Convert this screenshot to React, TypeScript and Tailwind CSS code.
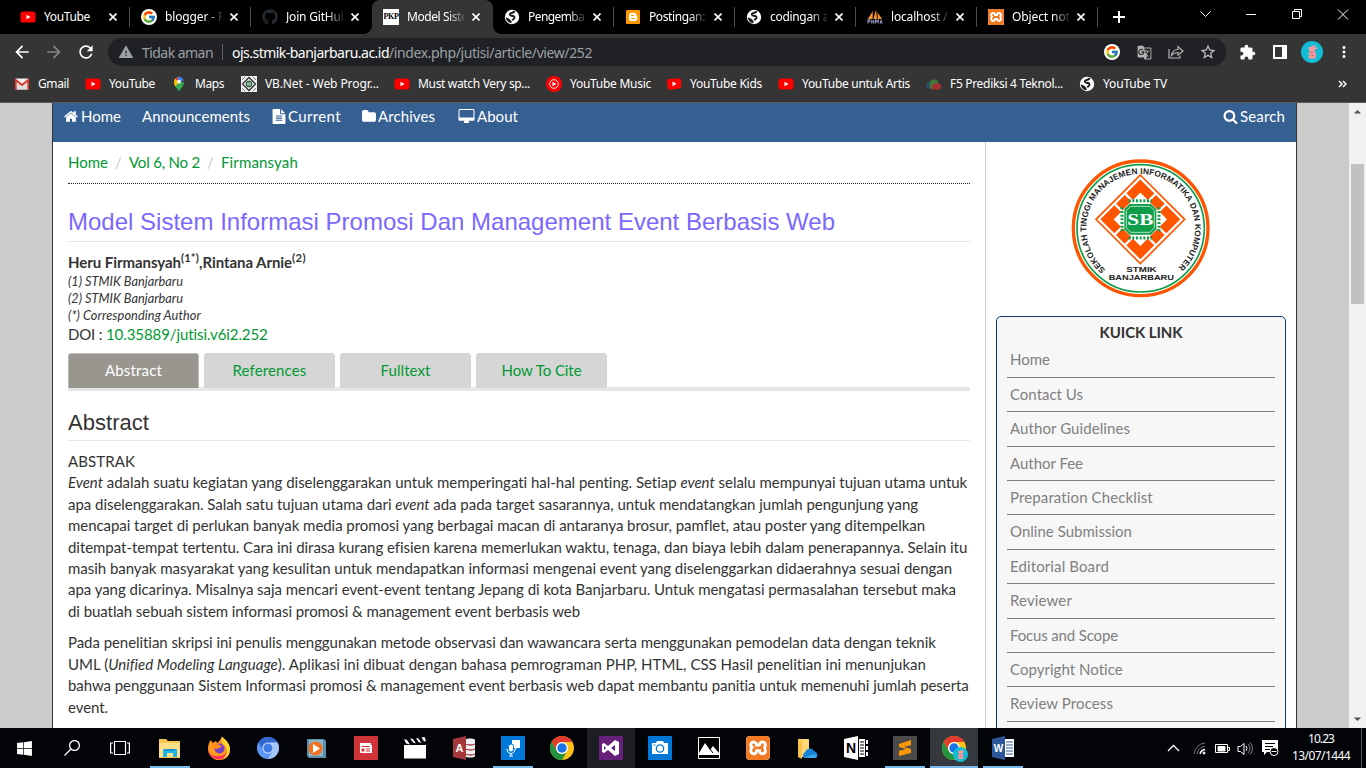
import type { ReactNode } from "react";
import { useLayoutEffect, useRef, useState } from "react";
import { FcGoogle } from "react-icons/fc";
import { FaGithub, FaWindows } from "react-icons/fa";
import { SiXampp } from "react-icons/si";
import { MdArrowBack, MdArrowForward, MdRefresh, MdWarning, MdExtension, MdStarBorder, MdMoreVert, MdGTranslate } from "react-icons/md";

/* Text set to a fixed measure by adjusting its tracking. */
function Fit({ w, className = "", children }: { w: number; className?: string; children: ReactNode }) {
  const ref = useRef<HTMLSpanElement>(null);
  const [ls, setLs] = useState(0);
  useLayoutEffect(() => {
    const el = ref.current;
    if (!el) return;
    const n = (el.textContent ?? "").length;
    setLs((w - el.getBoundingClientRect().width) / n);
  }, [w]);
  return (
    <span ref={ref} className={`inline-block whitespace-pre ${className}`} style={{ letterSpacing: `${ls}px` }}>
      {children}
    </span>
  );
}

const YouTube = () => (
  <svg width="16" height="16" viewBox="0 0 16 16">
    <rect x="0.5" y="2.5" width="15" height="11" rx="2.6" fill="#f00" />
    <path d="M6.5 5.7v4.6l4-2.3z" fill="#fff" />
  </svg>
);
const GoogleDot = () => (
  <span className="flex size-4 items-center justify-center rounded-full bg-white">
    <FcGoogle size={14} />
  </span>
);
const Globe = () => (
  <svg width="16" height="16" viewBox="0 0 16 16">
    <circle cx="8" cy="8" r="7.200" fill="#fff" />
    <path d="M10.200 2.200C9.500 4 8.500 3.800 7 4.200 5.200 4.800 5.500 6.500 7.500 6.700c2.500.2 3.500 1.200 2.800 2.500-.6 1-1.600.8-1.800 2.300" fill="none" stroke="#1b1b1b" strokeWidth="1.900" />
    <path d="M1.800 8.200l3.400 1.500c1.500.8 1.200 1.800 2.300 2.300v2.200C4.500 14 2 11.500 1.800 8.200z" fill="#1b1b1b" />
    <path d="M9.500 2l1.700.6c-.2 1.200-.8 1.700-1.900 2z" fill="#1b1b1b" />
  </svg>
);
const Pkp = () => (
  <span className="flex size-4 items-center justify-center bg-white font-['Liberation_Serif',serif] text-[8px] font-bold tracking-[-0.4px] text-black">PKP</span>
);
const Blogger = () => (
  <svg width="16" height="16" viewBox="0 0 16 16">
    <rect x="1" y="1" width="14" height="14" rx="1" fill="#ff9800" />
    <path d="M6.6 3.8h2.2a2.6 2.6 0 0 1 2.6 2.6c0 .8.9.6.9 1.3v1.6a2.8 2.8 0 0 1-2.8 2.8H6.6a2.6 2.6 0 0 1-2.6-2.6V6.400a2.600 2.600 0 0 1 2.600-2.600z" fill="#fff" />
    <path d="M6.500 6.500h2.200M6.500 9.500h3.200" stroke="#ff9800" strokeWidth="1.200" strokeLinecap="round" />
  </svg>
);
const Pma = () => (
  <svg width="17" height="16" viewBox="0 0 17 16">
    <path d="M1 10 6 2v8zM7 10l2-9 2 9zM11 3l5 7h-4z" fill="#f39a2d" />
    <path d="M6 2v8M10 2l1 8" stroke="#b65a12" strokeWidth="0.8" />
    <path d="M1 15v-4h2v2H1M5 11v4m0-2h2m0-2v4M9 15v-4l1.500 2 1.500-2v4M14 15l1-4 1 4" stroke="#8d8fae" strokeWidth="1.200" fill="none" />
  </svg>
);
const Xampp = ({ small = false }: { small?: boolean }) => (
  <span className={`flex overflow-hidden bg-white ${small ? "size-4 rounded-[1px]" : "size-6 rounded-sm"}`}>
    <SiXampp size={small ? 16 : 24} color="#f27a24" />
  </span>
);

const Close = () => (
  <svg width="8" height="8" viewBox="0 0 8 8" className="shrink-0">
    <path d="M.5.5l7 7M7.500.5l-7 7" stroke="#fff" strokeWidth="1.600" />
  </svg>
);

type TabData = { icon: ReactNode; title: string; w: number; active?: boolean; divider?: boolean };
const tabs: TabData[] = [
  { icon: <YouTube />, title: "YouTube", w: 46, divider: true },
  { icon: <GoogleDot />, title: "blogger - Pen", w: 74, divider: true },
  { icon: <FaGithub size={16} color="#24292e" />, title: "Join GitHub", w: 62 },
  { icon: <Pkp />, title: "Model Sistem", w: 71, active: true },
  { icon: <Globe />, title: "Pengembang", w: 70, divider: true },
  { icon: <Blogger />, title: "Postingan: A", w: 66, divider: true },
  { icon: <Globe />, title: "codingan apl", w: 69, divider: true },
  { icon: <Pma />, title: "localhost / 1", w: 66, divider: true },
  { icon: <Xampp small />, title: "Object not fo", w: 72, divider: true },
];

function Tab({ t }: { t: TabData }) {
  return (
    <div className={`flex h-[34px] w-[121px] shrink-0 items-center pl-[11px] ${t.active ? "relative rounded-t-lg bg-[#353535]" : ""}`}>
      {t.active && (
        <>
          <span className="absolute bottom-0 -left-2 size-2 bg-[radial-gradient(circle_at_0_0,transparent_7.5px,#353535_8px)]" />
          <span className="absolute -right-2 bottom-0 size-2 bg-[radial-gradient(circle_at_100%_0,transparent_7.5px,#353535_8px)]" />
        </>
      )}
      <span className="flex w-4 shrink-0 justify-center">{t.icon}</span>
      <span className={`ml-2 w-[57px] overflow-hidden whitespace-nowrap text-[12px] leading-4 ${t.title === "YouTube" ? "" : "[mask-image:linear-gradient(to_right,black_40px,transparent_60px)]"}`}>
        <Fit w={t.w}>{t.title}</Fit>
      </span>
      <span className="ml-[8px] flex"><Close /></span>
      {t.divider && <span className="ml-[12px] h-5 w-px bg-[#4c4c4c]" />}
    </div>
  );
}

const Gmail = () => (
  <svg width="16" height="16" viewBox="0 0 16 16">
    <rect x="1" y="2.500" width="14" height="11" rx="1" fill="#f2f2f2" />
    <path d="M3 13.500V6l5 4 5-4v7.500z" fill="#dedede" />
    <path d="M1.800 13.500V4l6.200 5 6.200-5v9.500" stroke="#d9372c" strokeWidth="1.800" fill="none" />
  </svg>
);
const Maps = () => (
  <svg width="16" height="16" viewBox="0 0 16 16">
    <path d="M8 16c-.6-3-5-5-5-9.700L8 6l5 .3C13 11 8.600 13 8 16z" fill="#34a853" />
    <path d="M3 6.500A5.200 5.200 0 0 1 4.200 2.600L8 6l-3.500 4.500C3.500 9 3 8 3 6.500z" fill="#fbbc04" />
    <path d="M4.200 2.600A5 5 0 0 1 8 .8V6z" fill="#ea4335" />
    <path d="M6.500 1a5 5 0 0 1 6.200 3.500L8 6z" fill="#4285f4" />
    <circle cx="8" cy="5.700" r="1.900" fill="#fff" />
  </svg>
);
const Vb = () => (
  <svg width="16" height="16" viewBox="0 0 16 16">
    <rect width="16" height="16" fill="#eee" />
    <path d="M8 1.500 14.500 8 8 14.500 1.500 8z" fill="none" stroke="#333" strokeWidth="1.300" />
    <circle cx="8" cy="8" r="3" fill="#5c9670" stroke="#30553d" />
    <path d="M1 4l3-3M12 1l3 3M1 12l3 3M12 15l3-3" stroke="#777" />
    <path d="M6 8h4" stroke="#ddd" />
  </svg>
);
const YtMusic = () => (
  <svg width="16" height="16" viewBox="0 0 16 16">
    <circle cx="8" cy="8" r="8" fill="#f00" />
    <circle cx="8" cy="8" r="4.300" fill="none" stroke="#fff" strokeWidth="0.900" />
    <path d="M6.500 5.700v4.600L10.300 8z" fill="#fff" />
  </svg>
);
const YtKids = () => (
  <svg width="16" height="16" viewBox="0 0 16 16">
    <path d="M1 4.500Q1 3 3 3l10-.8q2-.2 2.200 2v6q0 2-2 2.200l-9 1.300q-2 .3-2.400-2z" fill="#f00" />
    <path d="M6.500 5.500v4.800L10.500 7.700z" fill="#fff" />
  </svg>
);
const Cloud = () => (
  <svg width="16" height="16" viewBox="0 0 16 16">
    <path d="M1.500 12.500A4 4 0 0 1 3 5.500l4 1-2 6.500z" fill="#2d4b69" />
    <path d="M3.500 12C3 6 4.500 3.500 8 3.500c2.500 0 4 1.500 4.500 3.500L8 13H5z" fill="#3f7b3d" />
    <path d="M5.500 13.500c0-4.500 2.500-7 6-6.500a3.800 3.800 0 0 1 2.500 6.500z" fill="#a33232" />
  </svg>
);

const bookmarks: { icon: ReactNode; label: string; w: number; gap: string }[] = [
  { icon: <Gmail />, label: "Gmail", w: 31, gap: "pr-[16px]" },
  { icon: <YouTube />, label: "YouTube", w: 46, gap: "pr-[16px]" },
  { icon: <Maps />, label: "Maps", w: 29, gap: "pr-[17px]" },
  { icon: <Vb />, label: "VB.Net - Web Progr...", w: 114, gap: "pr-[15px]" },
  { icon: <YouTube />, label: "Must watch Very sp...", w: 112, gap: "pr-[16px]" },
  { icon: <YtMusic />, label: "YouTube Music", w: 81, gap: "pr-[15px]" },
  { icon: <YtKids />, label: "YouTube Kids", w: 72, gap: "pr-[16px]" },
  { icon: <YouTube />, label: "YouTube untuk Artis", w: 108, gap: "pr-[16px]" },
  { icon: <Cloud />, label: "F5 Prediksi 4 Teknol...", w: 113, gap: "pr-[16px]" },
  { icon: <Globe />, label: "YouTube TV", w: 64, gap: "" },
];

const Rabbit = ({ size }: { size: number }) => (
  <svg width={size} height={size} viewBox="0 0 22 22">
    <circle cx="11" cy="11" r="11" fill="#12bcd4" />
    <path d="M8.500 9.500C6.500 8 7.500 5.500 10 5.500L14 4l1 1-2 2 3-1 .5 1.500L13 9.500c2 1 2.500 4 1.500 8H8c-1-2-1-3 1-3l-2-2c0-1 1-1 2-1z" fill="#f79aa0" />
    <path d="M9 11l3 1M10 14l3 1" stroke="#c45a6c" strokeWidth="0.800" />
  </svg>
);

function BrowserChrome() {
  return (
    <header className="flex h-[103px] shrink-0 flex-col border-b border-[#5a5a5a] bg-[#353535] font-['Noto_Sans','Open_Sans',sans-serif] text-white">
      <div className="flex h-[34px] shrink-0 items-center bg-black pl-[9px]">
        {tabs.map((t) => <Tab key={t.title} t={t} />)}
        <svg width="268" height="34" viewBox="0 0 268 34" className="shrink-0" fill="none" stroke="#fff">
          <path d="M15 17h12M21 11v12" strokeWidth="2" />
          <path d="M102.500 11.500l5 5 5-5" strokeWidth="1" />
          <path d="M148 14.500h10M194.500 11.500h7v7h-7zM196.500 11.500v-2h7v7h-2M240 9.500l10 10M250 9.500l-10 10" />
        </svg>
      </div>
      <div className="flex h-[36px] shrink-0 items-center pl-[14px]">
        <MdArrowBack size={20} className="mr-[12px] -ml-0.5 w-5" />
        <MdArrowForward size={20} className="mr-[12px] w-5 text-[#858585]" />
        <MdRefresh size={20} className="mr-[12px]" />
        <div className="flex h-7 w-[1118px] items-center rounded-full bg-[#202124] pl-[10px]">
          <MdWarning size={16} className="text-[#9aa0a6]" />
          <span className="ml-[8px] text-[14px] text-[#9aa0a6]"><Fit w={71}>Tidak aman</Fit></span>
          <span className="mx-[9px] h-4 w-px bg-[#5f6368]" />
          <span className="text-[14px] text-white"><Fit w={157}>ojs.stmik-banjarbaru.ac.id</Fit></span>
          <span className="flex-1 text-[14px] text-[#9aa0a6]"><Fit w={203}>/index.php/jutisi/article/view/252</Fit></span>
          <GoogleDot />
          <MdGTranslate size={15} className="ml-[17px] text-[#b5b5b5]" />
          <svg width="16" height="16" viewBox="0 0 16 16" className="ml-[16px]" fill="none" stroke="#b5b5b5" strokeWidth="1.200">
            <path d="M1 5v9h11v-2.500M3.500 11.500c.5-4 3-6 6.500-6V2.500L15 7l-5 4V8.500c-3 0-5 1-6.500 3z" />
          </svg>
          <MdStarBorder size={18} className="mr-[9px] ml-[15px] text-[#c4c4c4]" />
        </div>
        <MdExtension size={17} className="ml-[13px]" />
        <svg width="14" height="14" viewBox="0 0 14 14" className="ml-[17px]"><path d="M0 0h14v14H0zM2 2v10h7V2z" fill="#fff" fillRule="evenodd" /></svg>
        <span className="ml-[14px]"><Rabbit size={22} /></span>
        <MdMoreVert size={18} className="ml-[12px]" />
      </div>
      <div className="flex h-[27px] items-center pl-[14px] text-[12px]">
        {bookmarks.map((b, i) => (
          <span key={i} className={`flex shrink-0 items-center ${b.gap}`}>
            <span className="mr-[8px] flex w-4 justify-center">{b.icon}</span>
            <Fit w={b.w}>{b.label}</Fit>
          </span>
        ))}
        <svg width="9" height="8" viewBox="0 0 9 8" className="mr-[19px] ml-auto" fill="none" stroke="#fff" strokeWidth="1.500"><path d="M1 1l3 3-3 3M5 1l3 3-3 3" /></svg>
      </div>
    </header>
  );
}

const fa = {
  home: "M1472 992v480q0 26-19 45t-45 19h-384v-384h-256v384h-384q-26 0-45-19t-19-45v-480q0-1 .5-3t.5-3l575-474 575 474q1 2 1 6zm223-69l-62 74q-8 9-21 11h-3q-13 0-21-7l-692-577-692 577q-12 8-24 7-13-2-21-11l-62-74q-8-10-7-23.500t11-21.500l719-599q32-26 76-26t76 26l244 204v-195q0-14 9-23t23-9h192q14 0 23 9t9 23v408l219 182q10 8 11 21.500t-7 23.500z",
  file: "M1596 476q14 14 28 36h-472v-472q22 14 36 28zm-476 164h544v1056q0 40-28 68t-68 28h-1344q-40 0-68-28t-28-68v-1600q0-40 28-68t68-28h800v544q0 40 28 68t68 28zm160 736v-64q0-14-9-23t-23-9h-704q-14 0-23 9t-9 23v64q0 14 9 23t23 9h704q14 0 23-9t9-23zm0-256v-64q0-14-9-23t-23-9h-704q-14 0-23 9t-9 23v64q0 14 9 23t23 9h704q14 0 23-9t9-23zm0-256v-64q0-14-9-23t-23-9h-704q-14 0-23 9t-9 23v64q0 14 9 23t23 9h704q14 0 23-9t9-23z",
  folder: "M1728 608v704q0 92-66 158t-158 66h-1216q-92 0-158-66t-66-158v-960q0-92 66-158t158-66h320q92 0 158 66t66 158v32h672q92 0 158 66t66 158z",
  desktop: "M1728 992v-832q0-13-9.500-22.500t-22.500-9.500h-1600q-13 0-22.500 9.500t-9.500 22.500v832q0 13 9.500 22.500t22.500 9.500h1600q13 0 22.500-9.500t9.500-22.500zm128-832v1088q0 66-47 113t-113 47h-544q0 37 16 77.500t32 71 16 43.500q0 26-19 45t-45 19h-512q-26 0-45-19t-19-45q0-14 16-44t32-70 16-78h-544q-66 0-113-47t-47-113v-1088q0-66 47-113t113-47h1600q66 0 113 47t47 113z",
  search: "M1216 832q0-185-131.500-316.500t-316.500-131.500-316.500 131.500-131.500 316.500 131.500 316.500 316.500 131.500 316.500-131.500 131.500-316.500zm512 832q0 52-38 90t-90 38q-54 0-90-38l-343-342q-179 124-399 124-143 0-273.500-55.500t-225-150-150-225-55.500-273.500 55.500-273.500 150-225 225-150 273.500-55.500 273.500 55.500 225 150 150 225 55.500 273.500q0 220-124 399l343 343q37 37 37 90z",
};
const Fa = ({ d, box = "0 0 1792 1792", w = 15, className = "" }: { d: string; box?: string; w?: number; className?: string }) => (
  <svg width={w} height="15" viewBox={box} fill="currentColor" className={className}><path d={d} /></svg>
);

function SiteNav() {
  return (
    <nav className="flex h-[39px] shrink-0 items-start bg-[#366092] pt-[3px] pl-[10px] text-[15px] leading-[21px] text-white">
      <span className="flex w-[79px] items-center"><Fa d={fa.home} w={16} className="mr-[2px]" /><Fit w={40}>Home</Fit></span>
      <span className="w-[129px]"><Fit w={108}>Announcements</Fit></span>
      <span className="flex w-[90px] items-center"><Fa d={fa.file} w={16} className="mr-px" /><Fit w={53}>Current</Fit></span>
      <span className="flex w-[97px] items-center"><Fa d={fa.folder} w={16} className="mr-px" /><Fit w={57}>Archives</Fit></span>
      <span className="flex items-center"><Fa d={fa.desktop} box="-64 0 1920 1792" w={17} className="mr-[2px]" /><Fit w={41}>About</Fit></span>
      <span className="mr-[11px] ml-auto flex items-center"><Fa d={fa.search} className="mr-[2px]" /><Fit w={45}>Search</Fit></span>
    </nav>
  );
}

const abstractLines: [number, ReactNode][] = [
  [67, "ABSTRAK"],
  [900, <><i>Event</i> adalah suatu kegiatan yang diselenggarakan untuk memperingati hal-hal penting. Setiap <i>event</i> selalu mempunyai tujuan utama untuk</>],
  [850, <>apa diselenggarakan. Salah satu tujuan utama dari <i>event</i> ada pada target sasarannya, untuk mendatangkan jumlah pengunjung yang</>],
  [857, "mencapai target di perlukan banyak media promosi yang berbagai macan di antaranya brosur, pamflet, atau poster yang ditempelkan"],
  [899, "ditempat-tempat tertentu. Cara ini dirasa kurang efisien karena memerlukan waktu, tenaga, dan biaya lebih dalam penerapannya. Selain itu"],
  [884, "masih banyak masyarakat yang kesulitan untuk mendapatkan informasi mengenai event yang diselenggarkan didaerahnya sesuai dengan"],
  [888, "apa yang dicarinya. Misalnya saja mencari event-event tentang Jepang di kota Banjarbaru. Untuk mengatasi permasalahan tersebut maka"],
  [512, "di buatlah sebuah sistem informasi promosi & management event berbasis web"],
];
const secondLines: [number, ReactNode][] = [
  [868, "Pada penelitian skripsi ini penulis menggunakan metode observasi dan wawancara serta menggunakan pemodelan data dengan teknik"],
  [858, <>UML (<i>Unified Modeling Language</i>). Aplikasi ini dibuat dengan bahasa pemrograman PHP, HTML, CSS Hasil penelitian ini menunjukan</>],
  [901, "bahwa penggunaan Sistem Informasi promosi & management event berbasis web dapat membantu panitia untuk memenuhi jumlah peserta"],
  [40, "event."],
];
const Lines = ({ rows }: { rows: [number, ReactNode][] }) => (
  <>{rows.map(([w, c], i) => <span key={i} className="block h-[21.430px]"><Fit w={w}>{c}</Fit></span>)}</>
);

const articleTabs: [string, number][] = [["Abstract", 57], ["References", 74], ["Fulltext", 50], ["How To Cite", 80]];

function Article() {
  return (
    <main className="w-[932px] shrink-0 pr-[15px] pl-[15px] text-[15px] leading-[21.430px] text-[#333]">
      <div className="flex h-[42px] items-start border-b border-dotted border-[#222] pt-[10px] text-[#009933]">
        <Fit w={40}>Home</Fit>
        <span className="w-[21px] text-center text-[#ccc]">/</span>
        <Fit w={71}>Vol 6, No 2</Fit>
        <span className="w-[21px] text-center text-[#ccc]">/</span>
        <Fit w={77}>Firmansyah</Fit>
      </div>
      <h1 className="h-[58px] border-b border-[#e7e7e7] pt-[25px] font-['Liberation_Sans',Arial,sans-serif] text-[24px] leading-[26px] text-[#7b68ff]">
        <Fit w={767}>Model Sistem Informasi Promosi Dan Management Event Berbasis Web</Fit>
      </h1>
      <div className="mt-[10px] h-[21px] font-bold">
        <Fit w={113}>Heru Firmansyah</Fit>
        <sup className="top-[-6px] text-[11.250px]"><Fit w={18}>(1*)</Fit></sup>
        <Fit w={93}>,Rintana Arnie</Fit>
        <sup className="top-[-6px] text-[11.250px]"><Fit w={14}>(2)</Fit></sup>
      </div>
      <div className="flex flex-col items-start text-[12.750px] leading-[17.140px] italic">
        <Fit w={115}>(1) STMIK Banjarbaru</Fit>
        <Fit w={115}>(2) STMIK Banjarbaru</Fit>
        <Fit w={133}>(*) Corresponding Author</Fit>
      </div>
      <div><Fit w={38}>DOI : </Fit><span className="text-[#009933]"><Fit w={162}>10.35889/jutisi.v6i2.252</Fit></span></div>
      <div className="mt-[7px] flex h-[38px] gap-[5px] border-b-4 border-[#e6e6e6]">
        {articleTabs.map(([l, w], i) => (
          <span key={l} className={`flex h-[35px] w-[131px] items-center justify-center rounded-t-[3px] ${i === 0 ? "border border-[#bbb] border-b-0 bg-[#999690] text-white" : "bg-[#d6d6d6] text-[#009933]"}`}>
            <Fit w={w}>{l}</Fit>
          </span>
        ))}
      </div>
      <h2 className="mt-[18px] mb-[10px] h-[32px] border-b border-[#e7e7e7] font-['Liberation_Sans',Arial,sans-serif] text-[22px] leading-[27px]">
        <Fit w={81}>Abstract</Fit>
      </h2>
      <div className="mb-[10px]"><Lines rows={abstractLines} /></div>
      <Lines rows={secondLines} />
    </main>
  );
}

function Logo() {
  return (
    <svg width="160" height="155" viewBox="0 0 480 465">
      <circle cx="242" cy="235" r="202" fill="#fff" stroke="#ff5500" strokeWidth="10" />
      <circle cx="242" cy="235" r="191" fill="none" stroke="#0f9d4a" strokeWidth="5" />
      <path id="ring" d="M136.500 359.300A163 163 0 1 1 349 357.800" fill="none" />
      <text fontSize="25" fontWeight="bold" fill="#222" className="font-['Liberation_Sans',sans-serif]">
        <textPath href="#ring" textLength="785">SEKOLAH TINGGI MANAJEMEN INFORMATIKA DAN KOMPUTER</textPath>
      </text>
      <path d="M241 75 374 208 241 341 108 208z" fill="#fff" stroke="#ff5500" strokeWidth="5" />
      <path d="M241 108 341 208 241 308 141 208z" fill="none" stroke="#ff5500" strokeWidth="28" strokeDasharray="45.400 7 37 7 45 0" />
      <path d="M206 152h70M206 264h70M186 172v73M297 172v73" stroke="#0f9d4a" strokeWidth="9" strokeDasharray="6 5" />
      <path d="M209 162h64l16 16v60l-16 16h-64l-16-16v-60z" fill="#0f9d4a" />
      <path d="M212 169h58l13 13v52l-13 13h-58l-13-13v-52z" fill="none" stroke="#fff" strokeWidth="2" />
      <text x="202" y="226" fontSize="52" fontWeight="bold" fill="#fff" textLength="78" lengthAdjust="spacingAndGlyphs" className="font-['Liberation_Serif',serif]">SB</text>
      <g fontSize="24" fontWeight="bold" fill="#222" className="font-['Liberation_Sans',sans-serif]">
        <text x="199" y="367" textLength="91" lengthAdjust="spacingAndGlyphs">STMIK</text>
        <text x="146" y="391" textLength="196" lengthAdjust="spacingAndGlyphs">BANJARBARU</text>
      </g>
    </svg>
  );
}

const links: [string, number][] = [
  ["Home", 40], ["Contact Us", 73], ["Author Guidelines", 120], ["Author Fee", 73], ["Preparation Checklist", 143], ["Online Submission", 122],
  ["Editorial Board", 99], ["Reviewer", 62], ["Focus and Scope", 108], ["Copyright Notice", 113], ["Review Process", 103], ["Publication Ethics", 118],
];

function Sidebar() {
  return (
    <aside className="flex flex-1 flex-col border-l border-[#ccc] px-[10px] text-[15px] leading-[21.430px]">
      <div className="flex h-[174px] shrink-0 justify-center pt-[8px] pr-[2px]"><Logo /></div>
      <div className="h-[500px] shrink-0 rounded-[5px] border border-[#0c3a70] bg-[#f7f7f7] px-[10px] pt-[5px]">
        <h3 className="text-center font-bold text-[#333]"><Fit w={83}>KUICK LINK</Fit></h3>
        {links.map(([l, w]) => (
          <div key={l} className="h-[34.400px] border-b border-[#808080] pt-[6px] pl-[3px] text-[#808080]"><Fit w={w}>{l}</Fit></div>
        ))}
      </div>
    </aside>
  );
}

function ChromeLogo({ size = 24 }: { size?: number }) {
  return (
    <svg width={size} height={size} viewBox="0 0 24 24">
      <circle cx="12" cy="12" r="12" fill="#fbc116" />
      <path d="M1.600 6A12 12 0 0 1 22.400 6H12a6 6 0 0 0-5.200 9z" fill="#e33b2e" />
      <path d="M1.600 6A12 12 0 0 0 12 24l5.200-9A6 6 0 0 1 6.800 15z" fill="#229342" />
      <circle cx="12" cy="12" r="6" fill="#fff" />
      <circle cx="12" cy="12" r="4.700" fill="#1a73e8" />
    </svg>
  );
}

const S = ({ children }: { children: ReactNode }) => <svg width="24" height="24" viewBox="0 0 24 24">{children}</svg>;

const apps: { icon: ReactNode; line?: boolean; bg?: string }[] = [
  { line: true, icon: <S><path d="M1 3h7l2 2h12v17H1z" fill="#f4c64f" /><path d="M1 7h21v14H1z" fill="#fcdf87" /><path d="M5 13h14v8h-4v-4H9v4H5z" fill="#1cb7ea" /><path d="M7 13h10v2H7z" fill="#1d8ecb" /></S> },
  { icon: <S><path d="M15 .5c1 2 8 5 8 13A11 11 0 0 1 1 13c0-4 1-7 3-9l1.500 3L9 5l1 2c2-1 4-4 5-6.500z" fill="#ff9a1f" /><path d="M15 .5c1 2 8 5 8 13a11 11 0 0 1-7 10c5-5 5-12 1-15-2-2-3-5-2-8z" fill="#ffd52f" /><path d="M1 11c0 8 6 10 11 9 4 0 7-2 8-5-1 5-4 8.500-8 8.500S1 20 1 13z" fill="#ff2f5c" /><circle cx="12.500" cy="12.500" r="5" fill="#7140c9" /><path d="M5 9c3-2 6-2 7 0l3 1c-1 2-4 2-5 3-3 0-4-1-5-4z" fill="#ff8a1c" /></S> },
  { icon: <S><circle cx="12" cy="12" r="11" fill="#5e97f6" /><path d="M2.500 6.500A11 11 0 0 1 21.500 6.500H12A5.500 5.500 0 0 0 7 14.500z" fill="#2f66cf" /><path d="M21.500 6.500A11 11 0 0 1 12 23l5-8.500c1.500-3 0-6-3-8z" fill="#a7c7fb" /><circle cx="12" cy="12" r="5.500" fill="#cfe0fc" /><circle cx="12" cy="12" r="4.500" fill="#3e7ae6" /></S> },
  { icon: <S><path d="M2 3h17l2 2v17H4l-2-2z" fill="#5b8da7" /><path d="M4 4h14v16H4z" fill="#86b8cf" /><circle cx="10.500" cy="12.500" r="7" fill="#f37021" /><path d="M8 8l7 4.500L8 17z" fill="#fff" /></S> },
  { icon: <S><path d="M0 0h24v24H0z" fill="#d13438" /><path d="M6 7h11v2h1v8H7q-1 0-1-1z" fill="#fff" /><path d="M7.500 10.500h8M12 13h4M12 15h4" stroke="#d13438" /><path d="M7.500 12.500h3v3h-3z" fill="#d13438" /></S> },
  { icon: <S><path d="M1 9h22v13.500H1zM1 3l3 1 3 4.500-4-1zM7 2.500l3 .5 3 4.500-3-1zM13 2l2.500.5 3 4.500-3-1zM18.500 1.500l3-.5 1.500 4-2 .5z" fill="#fff" /></S> },
  { icon: <S><path d="M13 4c0-2 10-2 10 0v16c0 2-10 2-10 0z" fill="#f0f0f0" /><path d="M13 8q6 2 10 0M13 13q6 2 10 0M13 18q6 2 10 0" stroke="#a4373a" strokeWidth="1.300" fill="none" /><path d="M1 3l13-3v24L1 21z" fill="#a4373a" /><text x="7.500" y="16" fontSize="11" fontWeight="bold" fill="#fff" textAnchor="middle" className="font-['Liberation_Sans',sans-serif]">A</text></S> },
  { line: true, icon: <S><path d="M0 0h24v24H0z" fill="#0078d7" /><path d="M11 4h8v8h-3l-2 2v-2h-3z" fill="#fff" /><rect x="7.500" y="8" width="5" height="8" rx="2.500" fill="#fff" stroke="#0078d7" /><path d="M6 13c0 6 8 6 8 0M10 17v3M8 20h4" stroke="#fff" fill="none" /></S> },
  { icon: <ChromeLogo /> },
  { bg: "bg-[#1c1e22]", icon: <S><path d="M0 0h24v24H0z" fill="#68217a" /><path d="M16 4l4 2v12l-4 2-7-6-4 3-2-1V8l2-1 4 3zM16 9l-4 3 4 3zM5 10v4l2-2z" fill="#fff" fillRule="evenodd" /></S> },
  { icon: <S><path d="M0 0h24v24H0z" fill="#0078d7" /><path d="M4 7h4l1-2h6l1 2h4v11H4z" fill="#fff" /><circle cx="12" cy="12.500" r="3.700" fill="#fff" stroke="#0078d7" strokeWidth="1.300" /><path d="M5.500 9h2" stroke="#0078d7" /></S> },
  { icon: <S><path d="M1.500 1.500h21v21h-21z" fill="#000" stroke="#fff" /><path d="M2 17l6-10 5 7 3-4 6 7v2H2z" fill="#fff" /><path d="M13 13l3 4" stroke="#000" /></S> },
  { icon: <Xampp /> },
  { icon: <S><path d="M3 3h11v18H3z" fill="#ffd876" /><path d="M3 3l4 2v18l-4-2z" fill="#f8c04c" /><path d="M9 22a4 4 0 0 1 1-6 5 5 0 0 1 9-1 4 4 0 0 1 2 7z" fill="#1683d8" /><path d="M9 22l10-4q4 2 2 4z" fill="#35a8ef" /></S> },
  { icon: <S><path d="M0 3l14-3v24L0 21zM15 3h6v18h-6zM22 4h2v4h-2zM22 10h2v4h-2zM22 16h2v4h-2z" fill="#fff" /><path d="M16 6h4M16 9h4M16 12h4M16 15h4M16 18h4" stroke="#000" /><text x="7" y="17" fontSize="14" fontWeight="bold" textAnchor="middle" className="font-['Liberation_Sans',sans-serif]">N</text></S> },
  { line: true, icon: <S><rect width="24" height="24" rx="1" fill="#4b4b4b" /><path d="M6 8l12-4v5l-7 2 7 2v4L6 20v-5l7-2-7-2z" fill="#ff9800" /></S> },
  { line: true, bg: "bg-[#35393d]", icon: <span className="relative flex"><ChromeLogo /><span className="absolute -right-[2px] -bottom-[2px]"><Rabbit size={15} /></span></span> },
  { line: true, icon: <S><path d="M13 3h10v18H13z" fill="#fff" /><path d="M15 6h7M15 9h7M15 12h7M15 15h7M15 18h7" stroke="#2b579a" /><path d="M1 3l13-3v24L1 21z" fill="#2b579a" /><text x="7.500" y="16" fontSize="10" fontWeight="bold" fill="#fff" textAnchor="middle" className="font-['Liberation_Sans',sans-serif]">W</text></S> },
];

function Taskbar() {
  return (
    <footer className="flex h-10 shrink-0 items-stretch bg-[#020408] font-['Noto_Sans','Open_Sans',sans-serif] text-white">
      <span className="flex w-12 items-center justify-center"><FaWindows size={17} /></span>
      <span className="flex w-12 items-center justify-center">
        <svg width="16" height="16" viewBox="0 0 16 16" fill="none" stroke="#fff" strokeWidth="1.300"><circle cx="10.500" cy="5.500" r="4.900" /><path d="M7 9l-6.500 6.500" /></svg>
      </span>
      <span className="mr-[2px] flex w-12 items-center justify-center">
        <svg width="20" height="16" viewBox="0 0 20 16" fill="none" stroke="#fff" strokeWidth="1.200"><path d="M4.500 1.500h11v13h-11zM3 3H.6v10H3M17 3h2.400v10H17" /></svg>
      </span>
      <div className="flex gap-px">
        {apps.map((a, i) => (
          <span key={i} className={`flex w-12 flex-col items-center ${a.bg ?? ""}`}>
            <span className="flex h-[38px] items-center pt-[2px]">{a.icon}</span>
            {a.line && <span className={`h-0.5 bg-[#76b9ed] ${a.bg ? "w-12" : "w-10"}`} />}
          </span>
        ))}
      </div>
      <svg width="118" height="40" viewBox="0 0 118 40" className="ml-[140px] shrink-0" fill="none" stroke="#fff">
        <path d="M1 23l5.500-5.500L12 23" strokeWidth="1.300" />
        <path d="M27 26a12 12 0 0 1 11-11M30 26a9 9 0 0 1 8-7.500" stroke="#777" /><path d="M33 26a6 6 0 0 1 5-4.500" strokeWidth="1.500" /><circle cx="37" cy="25" r="1" fill="#fff" />
        <path d="M48.500 16.500h12v8h-12zM61 19.500h1.500v3H61" /><path d="M51 18.500h7v4.500h-7z" fill="#fff" />
        <path d="M71 18.500h2.500l3.500-3v11l-3.500-3H71z" /><path d="M79 18q2 2.500 0 5" /><path d="M81 16q4 4.500 0 9M83 14.500q5 6 0 12" stroke="#888" />
        <path d="M95 12h16v12h-11l-3 3v-3h-2z" fill="#fff" stroke="none" /><path d="M98 15.500h10M98 18.500h8M98 21.500h5" stroke="#000" /><circle cx="107" cy="23.500" r="4" fill="#000" /><path d="M104.500 23.500h5" />
      </svg>
      <div className="mt-px ml-auto flex w-[58px] flex-col items-center text-[12px] leading-[17px]">
        <span className="pt-px"><Fit w={26}>10.23</Fit></span>
        <Fit w={58}>13/07/1444</Fit>
      </div>
      <span className="mr-1 ml-[11px] w-px bg-[#55585c]" />
    </footer>
  );
}

export default function App() {
  return (
    <div className="flex h-[768px] w-[1366px] flex-col overflow-hidden font-[Lato,sans-serif]">
      <BrowserChrome />
      <div className="flex h-[625px] shrink-0 overflow-hidden bg-[#cbcbcb]">
        <div className="ml-[52px] flex w-[1245px] flex-col border-x border-[#333] bg-white">
          <SiteNav />
          <div className="flex h-[586px] overflow-hidden"><Article /><Sidebar /></div>
        </div>
        <div className="ml-auto flex w-[17px] flex-col items-center bg-[#f1f1f1]">
          <svg width="17" height="17" viewBox="0 0 17 17"><path d="M5 10.500h7L8.500 7z" fill="#505050" /></svg>
          <span className="mt-[44px] h-[140px] w-[13px] bg-[#c1c1c1]" />
          <svg width="17" height="17" viewBox="0 0 17 17" className="mt-auto"><path d="M5 6.500h7L8.500 10z" fill="#505050" /></svg>
        </div>
      </div>
      <Taskbar />
    </div>
  );
}
